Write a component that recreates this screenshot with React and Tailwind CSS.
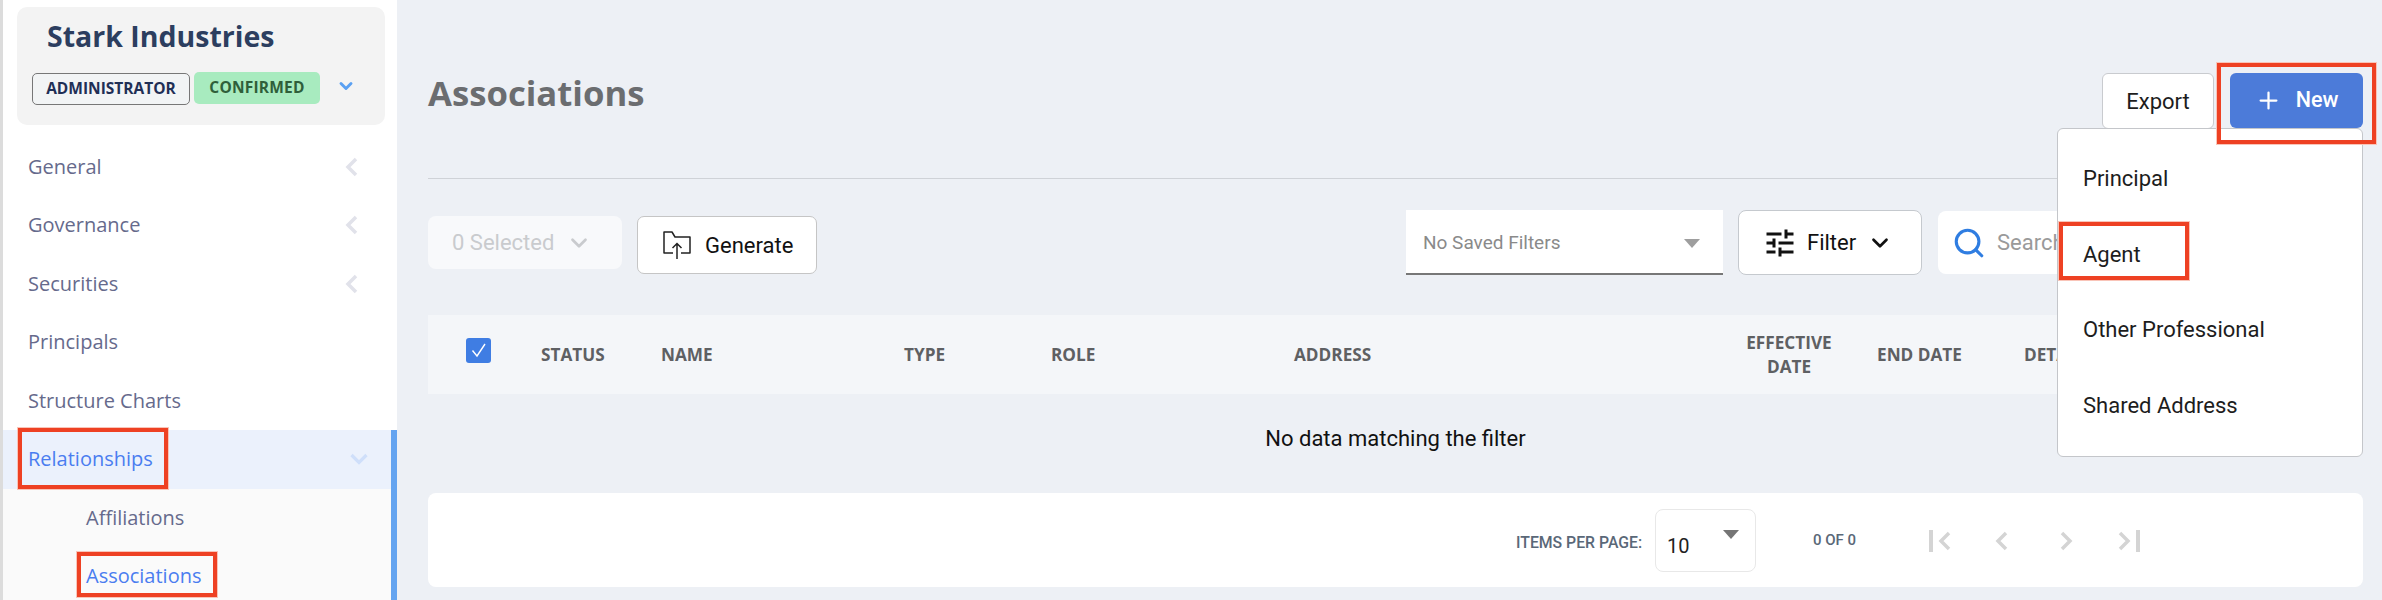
import { ChevronDown, Plus, Search } from "lucide-react";
import { MdTune } from "react-icons/md";

const sans = "font-['Open_Sans',sans-serif]";

function Redbox({ className }) {
  return <div className={`absolute border-[4px] border-[#ee4123] outline outline-1 outline-[#f9c4b8] pointer-events-none z-20 ${className}`} />;
}

function Chev({ dir, className }) {
  const d = dir === "left" ? "M11 2L3 10l8 8" : "M3 2l8 8-8 8";
  return (
    <svg width="14" height="20" viewBox="0 0 14 20" fill="none" stroke="currentColor" strokeWidth="3.5" className={className}>
      <path d={d} />
    </svg>
  );
}

function NavItem({ label, chevron }) {
  return (
    <div className="h-[58.5px] flex items-center justify-between pl-[25px] pr-[38px]">
      <span className="text-[20px] text-[#666a8c]">{label}</span>
      {chevron && <Chev dir="left" className="text-[#e1e2ea]" />}
    </div>
  );
}

function Sidebar() {
  return (
    <aside className={`w-[397px] shrink-0 bg-white border-l-[3px] border-[#dcdcdc] ${sans}`}>
      <div className="ml-[14px] mt-[7px] w-[368px] h-[118px] rounded-[10px] bg-[#f3f3f3] relative">
        <div className="pl-[30px] pt-[7px] text-[28.5px] leading-[44px] font-bold text-[#2c3e5f]">Stark Industries</div>
        <div className="flex items-start pl-[15px] mt-[14px]">
          <span className="mt-[1px] w-[158px] h-[32px] flex items-center justify-center rounded-[5px] border border-[#777] bg-[#f2f4f5] text-[15.5px] font-bold text-[#1f2f56]">ADMINISTRATOR</span>
          <span className="ml-[4px] w-[126px] h-[32px] flex items-center justify-center rounded-[5px] bg-[#a8ebbf] text-[15.5px] font-bold tracking-[0.2px] text-[#2f5f3a]">CONFIRMED</span>
          <ChevronDown size={20} strokeWidth={3.5} className="ml-[16px] mt-[4px] text-[#5aa0f2]" />
        </div>
      </div>
      <div className="mt-[12.5px]">
        <NavItem label="General" chevron />
        <NavItem label="Governance" chevron />
        <NavItem label="Securities" chevron />
        <NavItem label="Principals" />
        <NavItem label="Structure Charts" />
      </div>
      <div className="border-r-[6px] border-[#64a4f0]">
        <div className="relative h-[58.5px] bg-[#ebf1fc] flex items-center justify-between pl-[25px] pr-[23px]">
          <span className="text-[20px] text-[#4a7df0]">Relationships</span>
          <svg width="18" height="12" viewBox="0 0 18 12" fill="none" stroke="#cfdffa" strokeWidth="3.2"><path d="M1.5 2L9 9.5 16.5 2" /></svg>
          <Redbox className="left-[15px] top-[-2px] w-[150px] h-[61px]" />
        </div>
        <div className="bg-[#fafafa] pb-[40px]">
          <div className="h-[58.5px] flex items-center pl-[83px] text-[20px] text-[#666a8c]">Affiliations</div>
          <div className="relative h-[58.5px] flex items-center pl-[83px] text-[20px] text-[#4a7df0]">
            Associations
            <Redbox className="left-[74px] top-[5px] w-[140px] h-[45px]" />
          </div>
        </div>
      </div>
    </aside>
  );
}

function FolderUp() {
  return (
    <svg width="30" height="30" viewBox="0 0 30 30" fill="none" stroke="#222" strokeWidth="1.5">
      <path d="M11 23H2V2h8l3 5h15v16h-9" strokeLinejoin="round" />
      <path d="M15 29V14M10.5 18l4.5-4.5 4.5 4.5" />
    </svg>
  );
}

function Menu() {
  const items = ["Principal", "Agent", "Other Professional", "Shared Address"];
  return (
    <div className="absolute right-0 top-[55px] w-[306px] h-[329px] bg-white rounded-[6px] border border-[#c4c6ca] pt-[12px] z-10">
      {items.map((t) => (
        <div key={t} className="relative h-[75.5px] flex items-center pl-[25px] text-[22px] text-[#1d1d1d]">
          {t}
          {t === "Agent" && <Redbox className="left-[1px] top-[5px] w-[130px] h-[58px]" />}
        </div>
      ))}
    </div>
  );
}

function TableHead() {
  const th = `text-[17.2px] font-bold text-[#5e6063] ${sans}`;
  return (
    <div className="h-[79px] bg-[#f4f6f9] flex items-center">
      <div className="w-[113px] pl-[38px]">
        <div className="w-[25px] h-[25px] rounded-[3px] bg-[#3f7de3] flex items-center justify-center mt-[-9px]">
          <svg width="18" height="18" viewBox="0 0 18 18" fill="none" stroke="#fff" strokeWidth="1.4"><path d="M2.5 9.5l4.5 5.5 8-12" /></svg>
        </div>
      </div>
      <div className={`w-[120px] ${th}`}>STATUS</div>
      <div className={`w-[243px] ${th}`}>NAME</div>
      <div className={`w-[147px] ${th}`}>TYPE</div>
      <div className={`w-[243px] ${th}`}>ROLE</div>
      <div className={`w-[430px] ${th}`}>ADDRESS</div>
      <div className={`w-[130px] text-center leading-[24px] ${th}`}>EFFECTIVE<br />DATE</div>
      <div className={`w-[170px] pl-[23px] ${th}`}>END DATE</div>
      <div className={th}>DETAILS</div>
    </div>
  );
}

function Pager() {
  return (
    <div className="h-[94px] bg-white rounded-[8px] flex items-center pl-[1088px]">
      <span className="text-[15.8px] text-[#5a6878] font-medium mt-[6px] w-[139px] whitespace-nowrap">ITEMS PER PAGE:</span>
      <div className="w-[101px] h-[63px] border border-[#e8e8e8] rounded-[8px] relative pl-[11px] pt-[21px] text-[20px] text-[#222]">
        10
        <div className="absolute left-[67px] top-[20px] w-0 h-0 border-x-[8px] border-x-transparent border-t-[9px] border-t-[#757575]" />
      </div>
      <span className="ml-[57px] w-[116px] text-[15px] font-medium text-[#5a6878]">0 OF 0</span>
      <div className="flex items-center text-[#d4d4d4] mt-[2px]">
        <div className="w-[4px] h-[22px] bg-[#d4d4d4]" />
        <Chev dir="left" className="ml-[5px] mr-[43px]" />
        <Chev dir="left" className="mr-[50px]" />
        <Chev dir="right" className="mr-[44px]" />
        <Chev dir="right" className="mr-[5px]" />
        <div className="w-[4px] h-[22px] bg-[#d4d4d4]" />
      </div>
    </div>
  );
}

export default function App() {
  return (
    <div className="h-[600px] w-[2382px] overflow-hidden flex bg-[#edf0f5] font-['Roboto',sans-serif]">
      <Sidebar />
      <main className="flex-1 pl-[31px] pr-[19px] pt-[73px]">
        <div className="h-[56px] flex items-start justify-between">
          <h1 className={`text-[34.7px] leading-[40px] font-bold text-[#6b6d70] ${sans}`}>Associations</h1>
          <div className="relative flex gap-[16px]">
            <button className="w-[112px] h-[56px] bg-white border border-[#c9cbcf] rounded-[6px] text-[22px] text-[#1d1d1d]">Export</button>
            <button className="w-[133px] h-[55px] bg-[#4c7bd9] rounded-[6px] flex items-center justify-center gap-[14px] text-[21.5px] font-medium text-white">
              <Plus size={27} strokeWidth={2} />New
            </button>
            <Menu />
            <Redbox className="right-[-13px] top-[-10px] w-[159px] h-[81px]" />
          </div>
        </div>
        <div className="mt-[49px] h-px bg-[#cfd2d7]" />
        <div className="mt-[31px] h-[65px] flex items-start">
          <div className="mt-[6px] w-[194px] h-[53px] rounded-[8px] bg-[#f8f9fb] flex items-center pl-[24px] gap-[12px] text-[22px] text-[#c9cbce]">
            0 Selected <ChevronDown size={26} strokeWidth={2.5} />
          </div>
          <button className="ml-[15px] mt-[6px] w-[180px] h-[58px] bg-white border border-[#c5c5c5] rounded-[7px] flex items-center pl-[24px] gap-[13px] text-[22px] text-[#111]">
            <FolderUp />Generate
          </button>
          <div className="ml-[589px] w-[317px] h-[65px] bg-white border-b-[2px] border-[#777] flex items-center justify-between pl-[17px] pr-[23px] pt-[3px] text-[19px] text-[#8a8a8a]">
            No Saved Filters
            <div className="w-0 h-0 border-x-[8px] border-x-transparent border-t-[9px] border-t-[#9e9e9e]" />
          </div>
          <button className="ml-[15px] w-[184px] h-[65px] bg-white border border-[#c5c9ce] rounded-[8px] flex items-center pl-[23px] gap-[9px] text-[22px] text-[#111]">
            <MdTune size={36} />Filter<ChevronDown size={26} strokeWidth={2.5} className="ml-[2px]" />
          </button>
          <div className="ml-[16px] flex-1 h-[63px] mt-[1px] bg-white rounded-[8px] flex items-center pl-[14px] gap-[11px] text-[22px] text-[#9a9a9a]">
            <Search size={34} strokeWidth={2.2} className="text-[#2f7de1]" />Search
          </div>
        </div>
        <div className="mt-[40px]"><TableHead /></div>
        <div className="h-[99px] flex justify-center pt-[30px] text-[22px] leading-[30px] text-[#111]">No data matching the filter</div>
        <Pager />
      </main>
    </div>
  );
}
